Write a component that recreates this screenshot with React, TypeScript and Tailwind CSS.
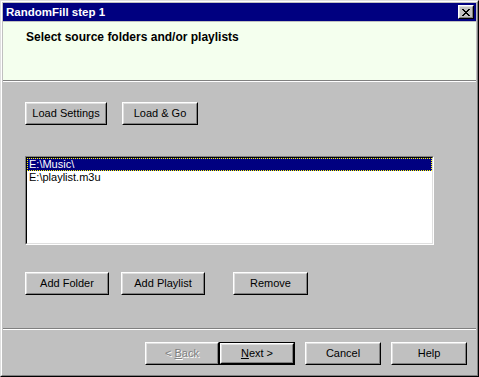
import React from "react";

const font = { fontFamily: '"Liberation Sans", Arial, sans-serif' };

function Btn({
  label,
  w,
  isDefault,
  disabled,
}: {
  label: React.ReactNode;
  w: string;
  isDefault?: boolean;
  disabled?: boolean;
}) {
  const bevel = (
    <div className="h-full border border-t-white border-l-white border-r-black border-b-black">
      <div className="h-full border border-t-[#dfdfdf] border-l-[#dfdfdf] border-r-[#808080] border-b-[#808080] bg-[#c0c0c0] flex items-center justify-center">
        <span
          className={
            disabled
              ? "text-[#808080] [text-shadow:1px_1px_0_#ffffff]"
              : "text-black"
          }
        >
          {label}
        </span>
      </div>
    </div>
  );
  return (
    <div className={`${w} h-[23px] ${isDefault ? "border border-black" : ""}`}>
      {bevel}
    </div>
  );
}

function CloseGlyph() {
  const rows = [
    "xx....xx",
    ".xx..xx.",
    "..xxxx..",
    "...xx...",
    "..xxxx..",
    ".xx..xx.",
    "xx....xx",
  ];
  return (
    <svg width="8" height="7" viewBox="0 0 8 7" shapeRendering="crispEdges">
      {rows.map((r, y) =>
        r.split("").map((c, x) =>
          c === "x" ? <rect key={`${x}-${y}`} x={x} y={y} width="1" height="1" fill="#000" /> : null
        )
      )}
    </svg>
  );
}

function Separator() {
  return (
    <div>
      <div className="h-px bg-[#808080]" />
      <div className="h-px bg-white" />
    </div>
  );
}

export default function App() {
  const items = ["E:\\Music\\", "E:\\playlist.m3u"];

  return (
    <div
      className="w-[479px] h-[377px] text-[11px] leading-[13px] border border-t-[#dfdfdf] border-l-[#dfdfdf] border-r-black border-b-black bg-[#c0c0c0]"
      style={font}
    >
      <div className="h-full border border-t-white border-l-white border-r-[#808080] border-b-[#808080] p-px flex flex-col">
        {/* title bar */}
        <div className="h-[18px] bg-[#000080] flex items-center justify-between pl-[3px] pr-[2px]">
          <span className="text-white font-bold text-[11.5px]">RandomFill step 1</span>
          <div className="w-4 h-[14px] border border-t-white border-l-white border-r-black border-b-black">
            <div className="h-full border border-t-[#dfdfdf] border-l-[#dfdfdf] border-r-[#808080] border-b-[#808080] bg-[#c0c0c0] flex items-center justify-center">
              <CloseGlyph />
            </div>
          </div>
        </div>
        <div className="h-px" />

        {/* header */}
        <div className="h-[58px] bg-[#f4ffee] pl-[23px] pt-[9px]">
          <span className="font-bold text-[12px]">Select source folders and/or playlists</span>
        </div>
        <Separator />

        {/* body */}
        <div className="flex-1 flex flex-col pt-[20px]">
          <div className="flex gap-[15px] pl-[22px]">
            <Btn label="Load Settings" w="w-[82px]" />
            <Btn label="Load & Go" w="w-[76px]" />
          </div>

          <div className="ml-[22px] mt-[31px] w-[409px] h-[89px] border border-t-[#808080] border-l-[#808080] border-r-white border-b-white">
            <div className="h-full border border-t-black border-l-black border-r-[#dfdfdf] border-b-[#dfdfdf] bg-white">
              {items.map((it, i) => (
                <div
                  key={it}
                  className={
                    i === 0
                      ? "h-[13px] bg-[#000080] text-white border border-dotted border-[#ffff00] pl-px leading-[11px]"
                      : "h-[13px] text-black pl-[2px]"
                  }
                >
                  {it}
                </div>
              ))}
            </div>
          </div>

          <div className="flex pl-[22px] mt-[27px]">
            <Btn label="Add Folder" w="w-[84px]" />
            <div className="w-[12px]" />
            <Btn label="Add Playlist" w="w-[84px]" />
            <div className="w-[28px]" />
            <Btn label="Remove" w="w-[75px]" />
          </div>

          <div className="mt-[33px]">
            <Separator />
          </div>

          <div className="flex mt-[12px] pl-[142px]">
            <Btn
              label={
                <>
                  &lt; <u>B</u>ack
                </>
              }
              w="w-[74px]"
              disabled
            />
            <Btn
              label={
                <>
                  <u>N</u>ext &gt;
                </>
              }
              w="w-[76px]"
              isDefault
            />
            <div className="w-[10px]" />
            <Btn label="Cancel" w="w-[76px]" />
            <div className="w-[10px]" />
            <Btn label="Help" w="w-[76px]" />
          </div>
        </div>
      </div>
    </div>
  );
}
